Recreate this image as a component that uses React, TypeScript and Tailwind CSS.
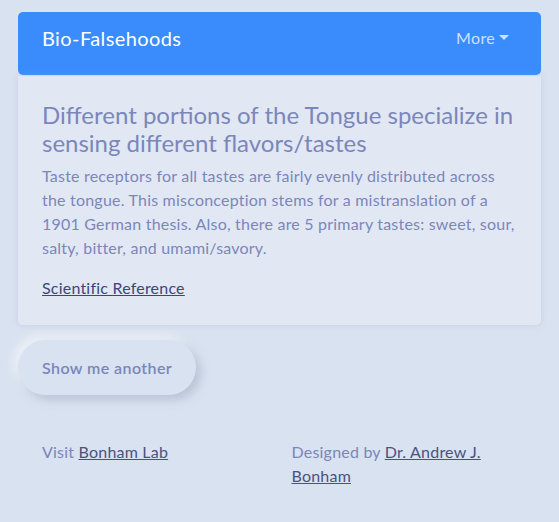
export default function App() {
  return (
    <div className="min-h-[522px] bg-[#d9e2f0] font-['Lato',sans-serif] tracking-[0.013em] text-[#7b86bb]">
      <div className="px-[18px] pt-3">
        <nav className="flex h-[63px] items-center justify-between rounded-[5px] bg-[#3a8cfd] px-6 pb-[11px]">
          <span className="text-[20px] tracking-[0.02em] text-white">Bio-Falsehoods</span>
          <button className="flex items-center gap-1 pr-2 text-[16px] tracking-[0.02em] text-white/75">
            More
            <span className="mt-[-2px] h-0 w-0 border-x-[5px] border-t-[5px] border-x-transparent border-t-white/75" />
          </button>
        </nav>

        <div className="mt-px rounded-b-[5px] bg-[#e2e8f3] px-6 pb-[25px] pt-[25px] shadow-[0_0_6px_rgba(160,175,205,0.35)]">
          <h1 className="text-[24px] leading-[28px] tracking-[0em]">
            Different portions of the Tongue specialize in sensing different flavors/tastes
          </h1>
          <p className="mt-[7px] text-[16px] leading-6">
            Taste receptors for all tastes are fairly evenly distributed across the tongue. This misconception stems for a mistranslation of a 1901 German thesis. Also, there are 5 primary tastes: sweet, sour, salty, bitter, and umami/savory.
          </p>
          <a href="#" className="mt-4 inline-block text-[16px] leading-6 text-[#3d4676] underline">
            Scientific Reference
          </a>
        </div>

        <button className="mt-[15px] h-[55px] rounded-full bg-[#d9e2f0] px-6 text-[16px] font-semibold tracking-[0.026em] text-[#7b86bb] shadow-[5px_5px_10px_rgba(163,177,198,0.6),-5px_-5px_10px_rgba(255,255,255,0.5)]">
          Show me another
        </button>

        <footer className="mt-[45px] grid grid-cols-2 pr-6 text-[16px] leading-6">
          <p className="px-6">
            Visit <a href="#" className="text-[#4a5380] underline">Bonham Lab</a>
          </p>
          <p className="px-6">
            Designed by <a href="#" className="text-[#4a5380] underline">Dr. Andrew J. Bonham</a>
          </p>
        </footer>
      </div>
    </div>
  );
}
